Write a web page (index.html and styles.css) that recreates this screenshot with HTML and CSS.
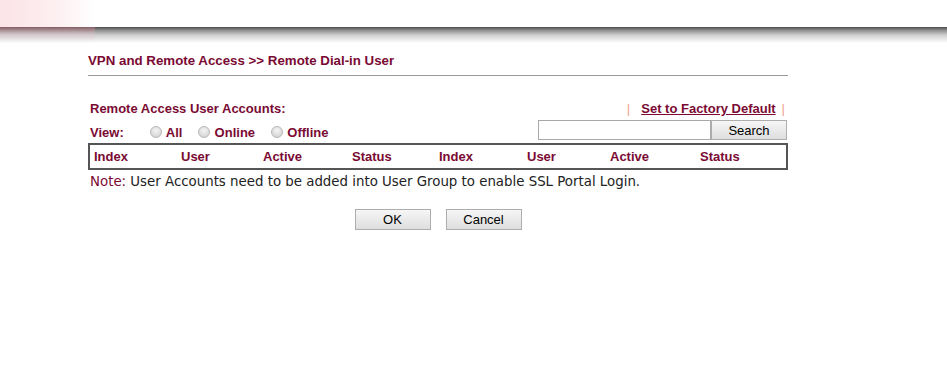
FILE: index.html
```html
<!DOCTYPE html>
<html lang="en">
<head>
    <meta charset="UTF-8">
    <title>Remote Dial-in User</title>
    <link rel="stylesheet" href="styles.css">
</head>
<body>
    <div class="topbar">
        <div class="topbar-fill"></div>
        <div class="topbar-shadow"></div>
    </div>
    <div class="content">
        <div class="page-title">VPN and Remote Access &gt;&gt; Remote Dial-in User</div>
        <div class="accounts-head">
            <span class="label">Remote Access User Accounts:</span>
            <span class="links"><span class="sep">|</span><a href="#">Set to Factory Default</a><span class="sep">|</span></span>
        </div>
        <div class="view-row">
            <div class="view-opts">
                <span class="label view-label">View:</span>
                <label><input type="radio" name="view"> All</label>
                <label><input type="radio" name="view"> Online</label>
                <label><input type="radio" name="view"> Offline</label>
            </div>
            <div class="search">
                <input type="text" class="search-box"><button class="btn search-btn">Search</button>
            </div>
        </div>
        <table class="user-table">
            <colgroup>
                <col class="c1"><col class="c2"><col class="c3"><col class="c4">
                <col class="c5"><col class="c6"><col class="c7"><col>
            </colgroup>
            <tr>
                <th>Index</th><th>User</th><th>Active</th><th>Status</th>
                <th>Index</th><th>User</th><th>Active</th><th>Status</th>
            </tr>
        </table>
        <p class="note"><span class="note-label">Note:</span> User Accounts need to be added into User Group to enable SSL Portal Login.</p>
        <div class="actions">
            <button class="btn">OK</button>
            <button class="btn">Cancel</button>
        </div>
    </div>
</body>
</html>
```

FILE: styles.css
```css
body {
    margin: 0;
    padding: 0;
    background-color: #fff;
    font-family: 'Liberation Sans', Arial, sans-serif;
    color: #7a0a33;
}
.topbar {
    position: relative;
    height: 43px;
}
.topbar-fill {
    height: 27px;
    background: linear-gradient(90deg, #fbe3e7 0, #fdf0f2 60px, #fff 95px);
}
.topbar-shadow {
    height: 16px;
    background: linear-gradient(180deg, #4c4c4c 0, #8a8a8a 3px, #cfcfcf 8px, #fff 16px);
}
.topbar-shadow::before {
    content: "";
    position: absolute;
    left: 0;
    top: 27px;
    width: 95px;
    height: 16px;
    background: linear-gradient(180deg, rgba(190, 110, 125, 0.5) 0, rgba(230, 190, 200, 0.3) 6px, rgba(255, 255, 255, 0) 16px);
}
.content {
    margin-left: 88px;
    width: 700px;
}
.page-title {
    font-size: 13.3px;
    font-weight: bold;
    padding: 10px 0 7px 0;
    border-bottom: 1px solid #999;
}
.label {
    font-size: 13px;
    font-weight: bold;
}
.accounts-head {
    display: flex;
    justify-content: space-between;
    margin-top: 25px;
    padding-left: 2px;
    height: 15px;
}
.links {
    font-size: 13px;
    font-weight: bold;
    margin-right: 3px;
}
.links a {
    color: #7a0a33;
    margin: 0 6px 0 11px;
}
.links .sep {
    color: #f0a090;
    font-weight: normal;
}
.view-row {
    display: flex;
    justify-content: space-between;
    align-items: flex-end;
    padding-left: 2px;
    margin-top: 4px;
}
.view-opts {
    font-size: 13px;
    font-weight: bold;
}
.view-label {
    display: inline-block;
    width: 54px;
}
.view-opts label {
    margin-right: 10px;
}
.view-opts input {
    appearance: none;
    -webkit-appearance: none;
    margin: 0 1px 0 2px;
    width: 12px;
    height: 12px;
    border: 1px solid #b8b8b8;
    border-radius: 50%;
    background: radial-gradient(circle at 50% 35%, #f4f4f4 0, #d8d8d8 70%, #c8c8c8 100%);
    vertical-align: -1px;
}
.search {
    display: flex;
    margin-right: 1px;
}
.search-box {
    width: 169px;
    height: 16px;
    border: 1px solid #a9a9a9;
    padding: 1px;
    margin: 0;
}
.btn {
    font-family: 'Liberation Sans', Arial, sans-serif;
    font-size: 13px;
    color: #000;
    background: linear-gradient(180deg, #f6f6f6, #dedede);
    border: 1px solid #adadad;
    height: 21px;
    padding: 0;
}
.search-btn {
    width: 76px;
    height: 20px;
}
.user-table {
    width: 700px;
    table-layout: fixed;
    border: 2px solid #555;
    border-collapse: collapse;
    margin-top: 3px;
}
.user-table .c1 { width: 88px; }
.user-table .c2 { width: 82px; }
.user-table .c3 { width: 89px; }
.user-table .c4 { width: 87px; }
.user-table .c5 { width: 88px; }
.user-table .c6 { width: 83px; }
.user-table .c7 { width: 90px; }
.user-table th {
    font-size: 13px;
    text-align: left;
    padding: 4px 4px 4px 4px;
    height: 14px;
}
.note {
    font-family: 'DejaVu Sans', Verdana, sans-serif;
    font-size: 13.35px;
    color: #222;
    margin: 4px 0 0 2px;
}
.note-label {
    color: #7a0a33;
}
.actions {
    display: flex;
    justify-content: center;
    gap: 15px;
    margin-top: 20px;
}
.actions .btn {
    width: 76px;
}
```
